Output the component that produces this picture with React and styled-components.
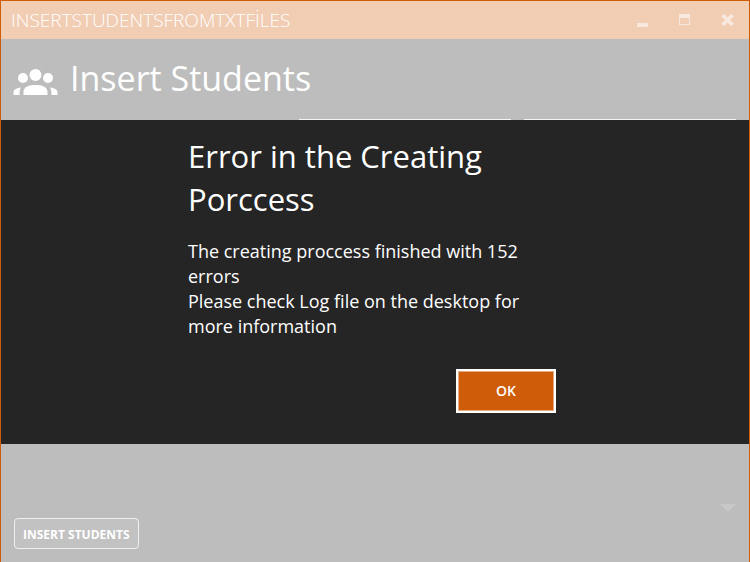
import React from 'react';
import styled, { createGlobalStyle } from 'styled-components';

const GlobalStyle = createGlobalStyle`
  * { box-sizing: border-box; }
  body { margin: 0; background: #bdbdbd; font-family: "Open Sans", "Noto Sans", sans-serif; color: #fff; }
  h1, h2, p { margin: 0; font-weight: 400; }
`;

const Window = styled.main`
  position: relative;
  display: flex;
  flex-direction: column;
  min-height: 100vh;
  border: 1px solid #cf5c09;
  border-bottom: 0;
  background: #bdbdbd;
  overflow: hidden;
`;

const TitleBar = styled.header`
  display: flex;
  align-items: center;
  justify-content: space-between;
  height: 38px;
  padding: 0 1px 0 10px;
  background: #f1cdb4;
`;

const AppName = styled.span`
  font-size: 19px;
  font-weight: 300;
  line-height: 26px;
  white-space: nowrap;
`;

const Caption = styled.div`
  display: flex;
`;

const CaptionButton = styled.button`
  display: flex;
  align-items: center;
  justify-content: center;
  width: 42px;
  height: 38px;
  padding: 0;
  border: 0;
  background: transparent;
`;

const Heading = styled.div`
  display: flex;
  align-items: center;
  gap: 12px;
  height: 80px;
  padding: 0 0 2px 11px;
`;

const PeopleIconBox = styled.svg`
  flex: none;
  margin-top: 8px;
`;

const HeadingText = styled.h1`
  font-size: 34px;
  line-height: 48px;
  white-space: nowrap;
`;

const Lists = styled.div`
  flex: 1;
  display: grid;
  grid-template-columns: 272px 1fr 1fr;
  gap: 13px;
  padding: 0 13px;
`;

const List = styled.div`
  grid-column: ${({ $column }) => $column};
  height: 300px;
  border-top: 1px solid #f4f4f4;
`;

const Footer = styled.footer`
  display: flex;
  align-items: flex-start;
  justify-content: space-between;
  padding: 0 13px 13px;
`;

const InsertButton = styled.button`
  height: 31px;
  margin-top: 14px;
  padding: 2px 8px 0;
  border: 1px solid #f0f0f0;
  border-radius: 4px;
  background: #c2c2c2;
  color: #fff;
  font: 700 12px "Open Sans", sans-serif;
  white-space: nowrap;
`;

const Overlay = styled.div`
  position: absolute;
  inset: 0;
  display: flex;
  align-items: center;
`;

const Dialog = styled.section`
  display: grid;
  grid-template-columns: 1fr 2fr 1fr;
  width: 100%;
  background: #252525;
`;

const DialogBody = styled.div`
  grid-column: 2;
  display: flex;
  flex-direction: column;
  padding: 15px 6px 31px 0;
`;

const DialogTitle = styled.h2`
  font-size: 31px;
  line-height: 43px;
  white-space: nowrap;
`;

const Message = styled.p`
  margin-top: 18px;
  font-size: 18px;
  line-height: 25px;
  white-space: nowrap;
`;

const OkButton = styled.button`
  align-self: flex-end;
  width: 100px;
  height: 44px;
  margin-top: 30px;
  padding: 0;
  border: 2px solid #fff;
  background: #cf5c09;
  box-shadow: inset 0 0 0 1px #e7ad84;
  color: #fff;
  font: 600 14px "Open Sans", sans-serif;
`;

const PeopleIcon = () => (
  <PeopleIconBox width="46" height="28" viewBox="0 0 46 28" fill="#fff" aria-hidden="true">
    <circle cx="11" cy="10" r="5" />
    <circle cx="36" cy="10" r="5" />
    <circle cx="23.500" cy="7" r="7" stroke="#bdbdbd" strokeWidth="2" />
    <path d="M11.500 27V23.500C12 18.500 17 17 23.500 17S35 18.500 35.500 23.500V27ZM1.500 27V24Q2 20 9 19.500Q7.500 21.500 7.500 27ZM45.500 27V24Q45 20 38 19.500Q39.500 21.500 39.500 27Z" />
  </PeopleIconBox>
);

export default function App() {
  return (
    <>
      <GlobalStyle />
      <Window>
        <TitleBar>
          <AppName>INSERTSTUDENTSFROMTXTFİLES</AppName>
          <Caption>
            <CaptionButton aria-label="Minimize">
              <svg width="14" height="14" viewBox="0 0 14 14"><path d="M1 10h11v4H1z" fill="#f9e8dd" /></svg>
            </CaptionButton>
            <CaptionButton aria-label="Maximize">
              <svg width="14" height="14" viewBox="0 0 14 14"><path fillRule="evenodd" d="M1 1h11v11H1zM2 5h9v6H2z" fill="#f9e8dd" /></svg>
            </CaptionButton>
            <CaptionButton aria-label="Close">
              <svg width="14" height="14" viewBox="0 0 14 14"><path d="M2.500 2l10 10M12.500 2l-10 10" stroke="#f9e8dd" strokeWidth="3.600" /></svg>
            </CaptionButton>
          </Caption>
        </TitleBar>
        <Heading>
          <PeopleIcon />
          <HeadingText>Insert Students</HeadingText>
        </Heading>
        <Lists>
          <List $column={2} />
          <List $column={3} />
        </Lists>
        <Footer>
          <InsertButton>INSERT STUDENTS</InsertButton>
          <svg width="16" height="8" viewBox="0 0 16 8" aria-hidden="true"><path d="M0 0h16L8 8z" fill="#c8c8c8" /></svg>
        </Footer>
        <Overlay>
          <Dialog role="dialog" aria-labelledby="dialog-title">
            <DialogBody>
              <DialogTitle id="dialog-title">Error in the Creating<br />Porccess</DialogTitle>
              <Message>
                The creating proccess finished with 152<br />errors<br />
                Please check Log file on the desktop for<br />more information
              </Message>
              <OkButton>OK</OkButton>
            </DialogBody>
          </Dialog>
        </Overlay>
      </Window>
    </>
  );
}
